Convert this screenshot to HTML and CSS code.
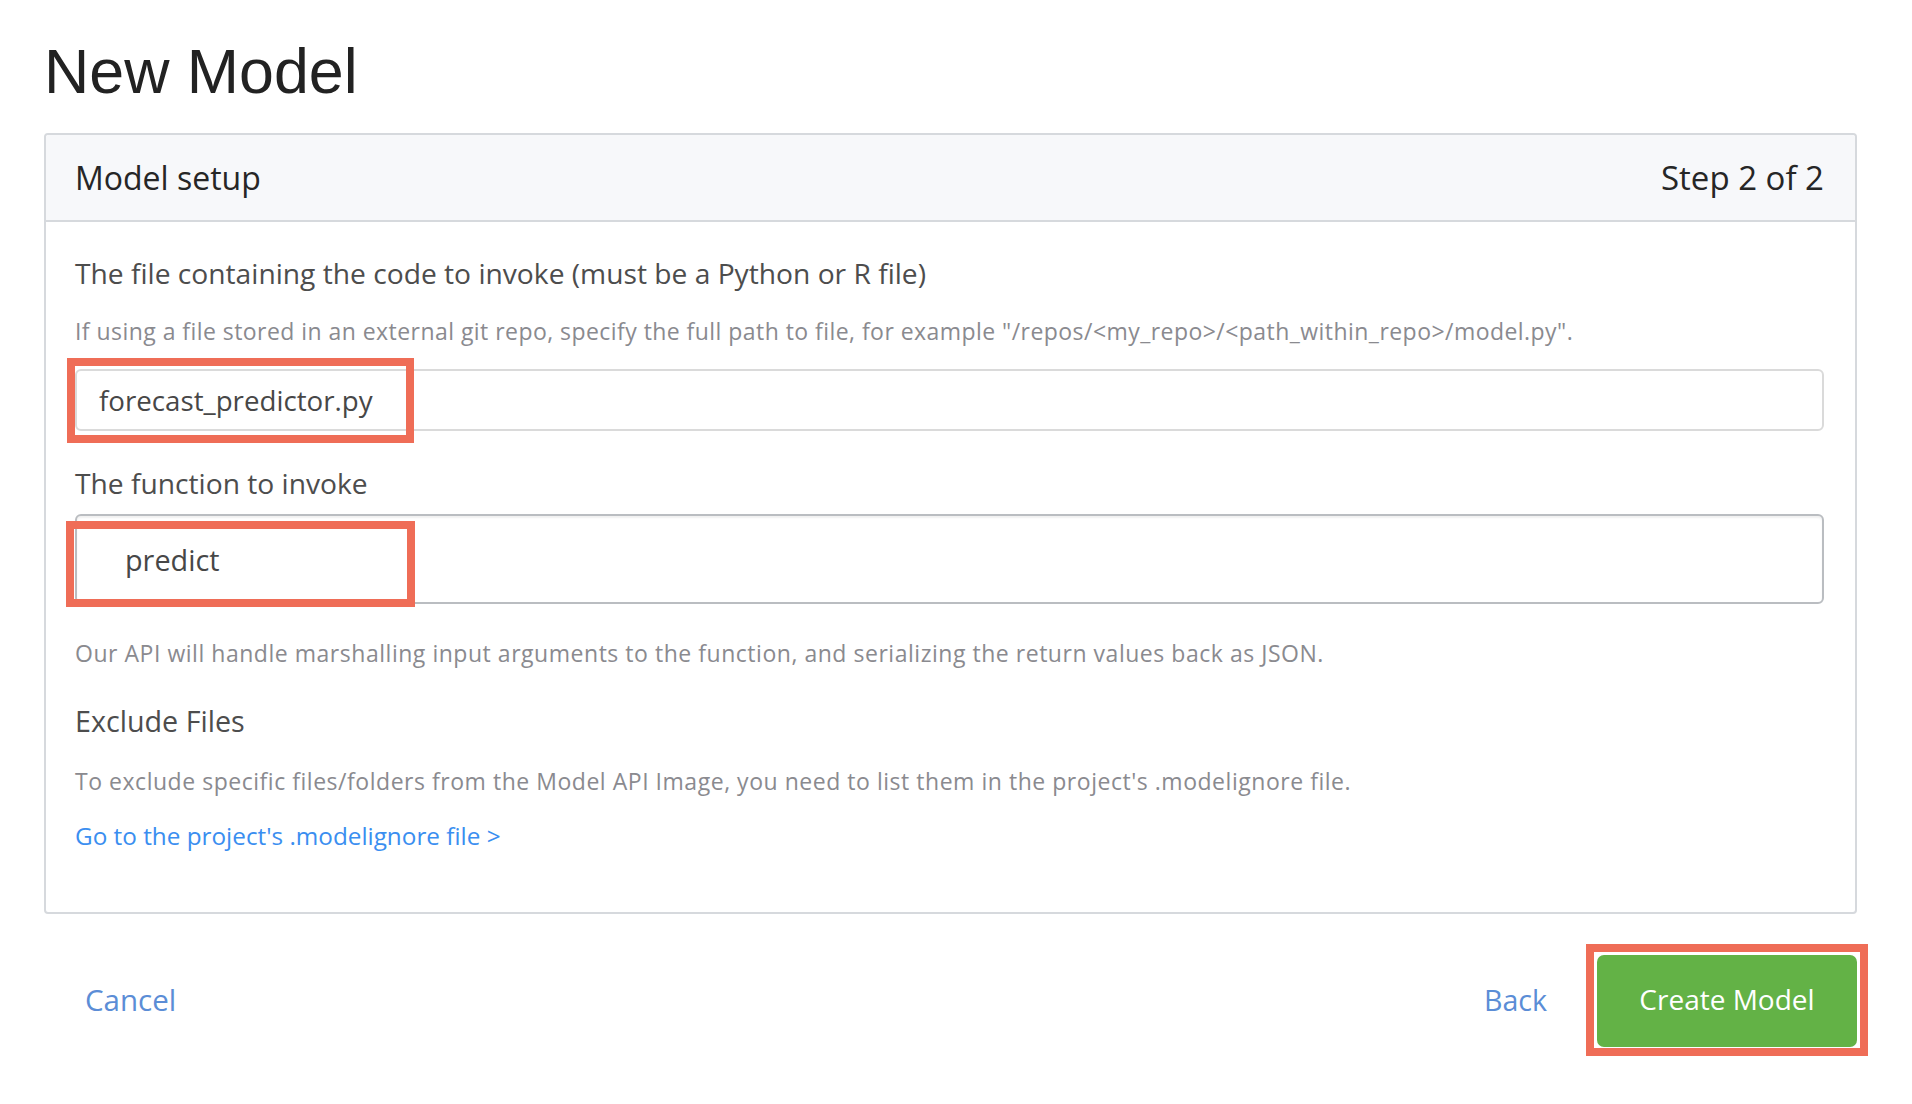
FILE: index.html
```html
<!DOCTYPE html>
<html lang="en">
<head>
<meta charset="utf-8">
<title>New Model</title>
<link rel="stylesheet" href="styles.css">
</head>
<body>
<div class="page">
  <h1 class="title">New Model</h1>
  <section class="card">
    <header class="card-head">
      <span class="head-title">Model setup</span>
      <span class="head-step">Step 2 of 2</span>
    </header>
    <div class="card-body">
      <div class="label label-first">The file containing the code to invoke (must be a Python or R file)</div>
      <div class="help help-file">If using a file stored in an external git repo, specify the full path to file, for example "/repos/&lt;my_repo&gt;/&lt;path_within_repo&gt;/model.py".</div>
      <div class="field">
        <div class="input input-file">forecast_predictor.py</div>
        <span class="annot annot-file"></span>
      </div>
      <div class="label label-fn">The function to invoke</div>
      <div class="field">
        <div class="input input-fn">predict</div>
        <span class="annot annot-fn"></span>
      </div>
      <div class="help help-api">Our API will handle marshalling input arguments to the function, and serializing the return values back as JSON.</div>
      <div class="label label-exclude">Exclude Files</div>
      <div class="help help-exclude">To exclude specific files/folders from the Model API Image, you need to list them in the project's .modelignore file.</div>
      <a class="link" href="#">Go to the project's .modelignore file &gt;</a>
    </div>
  </section>
  <footer class="actions">
    <a class="text-btn cancel" href="#">Cancel</a>
    <div class="actions-right">
      <a class="text-btn back" href="#">Back</a>
      <div class="btn-wrap">
        <button class="primary" type="button">Create Model</button>
        <span class="annot annot-btn"></span>
      </div>
    </div>
  </footer>
</div>
</body>
</html>
```

FILE: styles.css
```css
html, body {
  margin: 0;
  padding: 0;
  background: #ffffff;
}

body {
  font-family: "Open Sans", "Liberation Sans", sans-serif;
  color: #4b4b4b;
}

.page {
  padding: 40px 55px 48px 44px;
}

.title {
  margin: 0;
  font-family: "Liberation Sans", Arial, sans-serif;
  font-weight: 400;
  font-size: 62.7px;
  line-height: 62px;
  color: #222222;
}

.card {
  margin-top: 31px;
  border: 2px solid #d6d9dd;
  border-radius: 4px;
  background: #ffffff;
}

.card-head {
  display: flex;
  align-items: center;
  justify-content: space-between;
  height: 85px;
  padding: 0 31px 0 29px;
  background: #f7f8fa;
  border-bottom: 2px solid #d6d9dd;
  border-radius: 3px 3px 0 0;
  font-size: 32px;
  color: #262626;
}

.head-step {
  font-size: 33px;
}

.card-body {
  padding: 33px 31px 61px 29px;
}

.label {
  font-size: 28.2px;
  line-height: 36px;
  color: #4d4d4d;
}

.label-exclude {
  font-size: 28.7px;
}

.help {
  font-size: 23px;
  letter-spacing: 0.53px;
  line-height: 30px;
  color: #8a8a8f;
}

.help-file {
  letter-spacing: 0.45px;
}

.help-file {
  margin-top: 25px;
}

.field {
  position: relative;
}

.input {
  box-sizing: border-box;
  display: flex;
  align-items: center;
  color: #474747;
  background: #ffffff;
  border-radius: 6px;
}

.input-file {
  margin-top: 23px;
  height: 62px;
  padding-left: 22px;
  border: 2px solid #dadada;
  font-size: 27.7px;
}

.label-fn {
  margin-top: 34px;
}

.input-fn {
  margin-top: 13px;
  height: 90px;
  padding-left: 48px;
  border: 2px solid #babdc1;
  box-shadow: inset 0 2px 2px rgba(0, 0, 0, 0.06);
  font-size: 28.8px;
}

.help-api {
  margin-top: 34px;
}

.label-exclude {
  margin-top: 35px;
}

.help-exclude {
  margin-top: 27px;
}

.link {
  display: block;
  margin-top: 25px;
  font-size: 24.3px;
  line-height: 30px;
  color: #3a8ef0;
  text-decoration: none;
}

.actions {
  display: flex;
  align-items: center;
  justify-content: space-between;
  margin-top: 41px;
}

.actions-right {
  display: flex;
  align-items: center;
  gap: 50px;
}

.text-btn {
  color: #5b8dd6;
  text-decoration: none;
  padding-bottom: 4px;
}

.cancel {
  margin-left: 41px;
  font-size: 29.5px;
}

.back {
  font-size: 28.6px;
}

.btn-wrap {
  position: relative;
}

.primary {
  display: block;
  box-sizing: border-box;
  width: 260px;
  height: 92px;
  padding: 0 0 4px;
  border: none;
  border-radius: 7px;
  background: #63b246;
  color: #ffffff;
  font-family: "Open Sans", "Liberation Sans", sans-serif;
  font-size: 28px;
  cursor: pointer;
}

.annot {
  position: absolute;
  box-sizing: border-box;
  border: 8px solid #ef6d57;
  pointer-events: none;
}

.annot-file {
  left: -8px;
  top: -11px;
  width: 347px;
  height: 85px;
}

.annot-fn {
  left: -9px;
  top: 7px;
  width: 349px;
  height: 86px;
}

.annot-btn {
  left: -11px;
  top: -11px;
  width: 282px;
  height: 112px;
}
```
